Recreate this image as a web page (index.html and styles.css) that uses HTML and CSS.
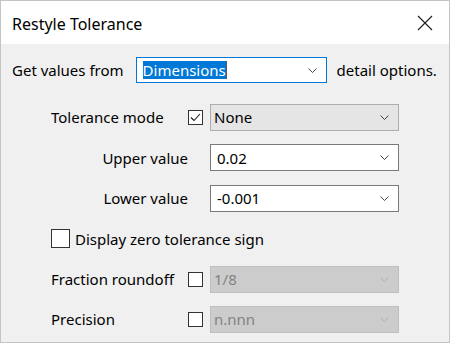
FILE: index.html
```html
<!DOCTYPE html>
<html>
<head>
    <title>Restyle Tolerance</title>
    <link rel="stylesheet" href="styles.css">
</head>
<body>
    <div class="window">
        <div class="titlebar">
            <span class="title">Restyle Tolerance</span>
            <svg class="close" width="16" height="16" viewBox="0 0 16 16"><path d="M1 1L15 15M15 1L1 15" stroke="#1a1a1a" stroke-width="1.1" fill="none"/></svg>
        </div>
        <div class="content">
            <div class="source-row">
                <span>Get values from</span>
                <div class="combo combo-focus combo-source">
                    <span class="combo-text"><span class="selected">Dimensions</span><span class="caret"></span></span>
                    <svg class="chevron" width="9" height="5" viewBox="0 0 9 5"><path d="M0.5 0.5L4.5 4.5L8.5 0.5" stroke="#444" fill="none"/></svg>
                </div>
                <span>detail options.</span>
            </div>

            <!-- tolerance options -->
            <div class="options">
                <span class="opt-label">Tolerance mode</span>
                <span class="check"><svg width="13" height="13" viewBox="0 0 13 13"><path d="M2 6.5L5 9.5L11 3" stroke="#1a1a1a" stroke-width="1.1" fill="none"/></svg></span>
                <div class="combo combo-list">
                    <span class="combo-text">None</span>
                    <svg class="chevron" width="9" height="5" viewBox="0 0 9 5"><path d="M0.5 0.5L4.5 4.5L8.5 0.5" stroke="#444" fill="none"/></svg>
                </div>

                <span class="opt-label opt-right">Upper value</span>
                <div class="combo combo-edit">
                    <span class="combo-text">0.02</span>
                    <svg class="chevron" width="9" height="5" viewBox="0 0 9 5"><path d="M0.5 0.5L4.5 4.5L8.5 0.5" stroke="#444" fill="none"/></svg>
                </div>

                <span class="opt-label opt-right">Lower value</span>
                <div class="combo combo-edit">
                    <span class="combo-text">-0.001</span>
                    <svg class="chevron" width="9" height="5" viewBox="0 0 9 5"><path d="M0.5 0.5L4.5 4.5L8.5 0.5" stroke="#444" fill="none"/></svg>
                </div>

                <div class="zero-row">
                    <span class="check check-big"></span>
                    <span>Display zero tolerance sign</span>
                </div>

                <span class="opt-label">Fraction roundoff</span>
                <span class="check"></span>
                <div class="combo combo-disabled">
                    <span class="combo-text">1/8</span>
                    <svg class="chevron" width="9" height="5" viewBox="0 0 9 5"><path d="M0.5 0.5L4.5 4.5L8.5 0.5" stroke="#b0b0b0" fill="none"/></svg>
                </div>

                <span class="opt-label">Precision</span>
                <span class="check"></span>
                <div class="combo combo-disabled">
                    <span class="combo-text">n.nnn</span>
                    <svg class="chevron" width="9" height="5" viewBox="0 0 9 5"><path d="M0.5 0.5L4.5 4.5L8.5 0.5" stroke="#b0b0b0" fill="none"/></svg>
                </div>
            </div>
        </div>
    </div>
</body>
</html>
```

FILE: styles.css
```css
body {
    margin: 0;
    font-family: "Noto Sans", Arial, sans-serif;
    font-size: 15px;
    color: #000;
    background-color: #f0f0f0;
}
.window {
    width: 450px;
    height: 343px;
    box-sizing: border-box;
    border: 1px solid #c4c4c4;
    display: flex;
    flex-direction: column;
}
.titlebar {
    height: 43px;
    background-color: #fff;
    display: flex;
    align-items: center;
    padding-left: 11px;
    padding-right: 16px;
}
.title {
    flex: 1;
    padding-top: 2px;
    font-size: 16px;
}
.content {
    flex: 1;
    background-color: #f0f0f0;
}
.source-row {
    display: flex;
    align-items: center;
    margin-top: 13px;
    padding-left: 11px;
    height: 26px;
}
.combo {
    height: 27px;
    box-sizing: border-box;
    display: flex;
    align-items: center;
    justify-content: space-between;
    padding-right: 9px;
    width: 189px;
}
.combo-text {
    display: flex;
    align-items: center;
}
.combo-source {
    width: 191px;
    height: 26px;
    margin-left: 12px;
    margin-right: 10px;
}
.combo-focus {
    background-color: #fff;
    border: 1px solid #0078d7;
    padding-left: 6px;
}
.selected {
    background-color: #0078d7;
    color: #fff;
    line-height: 18px;
}
.caret {
    width: 1px;
    height: 18px;
    background-color: #555;
}
.combo-list {
    background-color: #e5e5e5;
    border: 1px solid #adadad;
    padding-left: 3px;
}
.combo-edit {
    background-color: #fff;
    border: 1px solid #7a7a7a;
    padding-left: 6px;
    grid-column: 3;
}
.combo-disabled {
    background-color: #cccccc;
    border: 1px solid #bfbfbf;
    color: #838383;
    padding-left: 3px;
}
.options {
    display: grid;
    grid-template-columns: 137px 22px 189px;
    grid-auto-rows: 40.4px;
    align-items: center;
    margin-top: 14.3px;
    padding-left: 50px;
}
.opt-right {
    grid-column: 1;
    justify-self: end;
}
.check {
    width: 15px;
    height: 15px;
    box-sizing: border-box;
    border: 1px solid #333;
    background-color: #fff;
    display: flex;
    align-items: center;
    justify-content: center;
}
.check-big {
    width: 19px;
    height: 19px;
}
.zero-row {
    grid-column: 1 / 4;
    display: flex;
    align-items: center;
    gap: 5px;
}
```
